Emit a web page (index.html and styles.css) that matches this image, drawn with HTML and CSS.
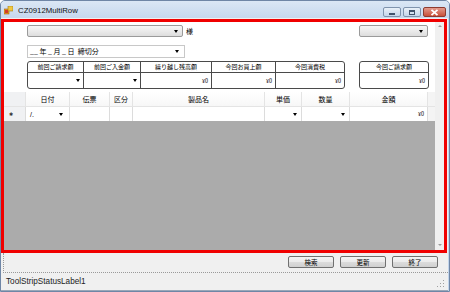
FILE: index.html
```html
<!DOCTYPE html>
<html lang="ja">
<head>
<meta charset="utf-8">
<title>CZ0912MultiRow</title>
<link rel="stylesheet" href="styles.css">
</head>
<body>
<div class="window">
  <div class="titlebar">
    <svg class="app-icon" width="9" height="9" viewBox="0 0 9 9">
      <rect x="0" y="3" width="5" height="5" fill="#e8a020" stroke="#a0601a" stroke-width="0.6"/>
      <rect x="4" y="0" width="5" height="5" fill="#f0c840" stroke="#a07a1a" stroke-width="0.6"/>
      <rect x="1" y="4" width="3" height="3" fill="#d23a2a"/>
    </svg>
    <span class="title">CZ0912MultiRow</span>
    <div class="caption-btns">
      <div class="cap-btn"><span class="cap-min"></span></div>
      <div class="cap-btn"><span class="cap-max"></span></div>
      <div class="cap-btn cap-close">
        <svg width="9" height="7" viewBox="0 0 9 7"><path d="M1.5 0.8 L7.5 6.2 M7.5 0.8 L1.5 6.2" stroke="#fff" stroke-width="1.8"/></svg>
      </div>
    </div>
  </div>
  <div class="client">
    <div class="grid-frame">
      <div class="grid-body">
        <div class="header-section">
          <div class="row1">
            <div class="combo combo-wide"><span class="arrow"></span></div>
            <span class="sama">様</span>
            <div class="spacer"></div>
            <div class="combo combo-small"><span class="arrow"></span></div>
          </div>
          <div class="row2">
            <div class="datebox">
              <span class="date-text">__ 年 _ 月 _ 日&nbsp;&nbsp;締切分</span>
              <span class="arrow"></span>
            </div>
          </div>
          <div class="row3">
            <div class="sumbox">
              <div class="sumcol c1"><div class="sumhead">前回ご請求額</div><div class="sumval"><span class="arrow"></span></div></div>
              <div class="sumcol c2"><div class="sumhead">前回ご入金額</div><div class="sumval"><span class="arrow"></span></div></div>
              <div class="sumcol c3"><div class="sumhead">繰り越し残高額</div><div class="sumval">¥0</div></div>
              <div class="sumcol c4"><div class="sumhead">今回お買上額</div><div class="sumval">¥0</div></div>
              <div class="sumcol c5"><div class="sumhead">今回消費税</div><div class="sumval">¥0</div></div>
            </div>
            <div class="spacer"></div>
            <div class="sumbox sumbox-single">
              <div class="sumcol c6"><div class="sumhead">今回ご請求額</div><div class="sumval">¥0</div></div>
            </div>
          </div>
          <div class="colheader">
            <div class="hc rh"></div>
            <div class="hc w-date">日付</div>
            <div class="hc w-slip">伝票</div>
            <div class="hc w-kbn">区分</div>
            <div class="hc w-name">製品名</div>
            <div class="hc w-price">単価</div>
            <div class="hc w-qty">数量</div>
            <div class="hc w-amt">金額</div>
            <div class="hc w-rest"></div>
          </div>
          <div class="newrow">
            <div class="nc rh star">✱</div>
            <div class="nc w-date"><span class="date-val">/.</span><span class="arrow"></span></div>
            <div class="nc w-slip"></div>
            <div class="nc w-kbn"></div>
            <div class="nc w-name"></div>
            <div class="nc w-price"><span class="arrow"></span></div>
            <div class="nc w-qty"><span class="arrow"></span></div>
            <div class="nc w-amt amt">¥0</div>
            <div class="nc w-rest"></div>
          </div>
        </div>
        <div class="empty-area"></div>
      </div>
      <div class="vscroll">
        <span class="sarrow up"></span>
        <span class="sarrow down"></span>
      </div>
    </div>
    <div class="button-panel">
      <button class="btn">検索</button>
      <button class="btn">更新</button>
      <button class="btn">終了</button>
    </div>
    <div class="status">
      <span class="status-label">ToolStripStatusLabel1</span>
      <svg class="grip" width="8" height="8" viewBox="0 0 8 8">
        <g fill="#a0a0a0"><rect x="6" y="0" width="1" height="1"/><rect x="6" y="3" width="1" height="1"/><rect x="3" y="3" width="1" height="1"/><rect x="6" y="6" width="1" height="1"/><rect x="3" y="6" width="1" height="1"/><rect x="0" y="6" width="1" height="1"/></g>
      </svg>
    </div>
  </div>
</div>
</body>
</html>
```

FILE: styles.css
```css
* { box-sizing: border-box; margin: 0; padding: 0; }
html, body { width: 450px; height: 292px; overflow: hidden; }
body {
  font-family: "Liberation Sans", "Noto Sans CJK JP", sans-serif;
  background: #ffffff;
  color: #000;
}
.window {
  width: 450px;
  height: 292px;
  display: flex;
  flex-direction: column;
  background: #c3d5ec;
  border: 1px solid #6f86a6;
  border-radius: 5px 5px 0 0;
}
.titlebar {
  height: 17px;
  flex: 0 0 17px;
  display: flex;
  align-items: center;
  padding-left: 3px;
  background: linear-gradient(#dbe7f5, #c6d8ee);
  border-radius: 4px 4px 0 0;
}
.app-icon { flex: 0 0 auto; margin-top: 1px; }
.title {
  font-size: 7.8px;
  margin-left: 5px;
  margin-top: 2px;
  color: #111;
}
.caption-btns {
  margin-left: auto;
  margin-right: 3px;
  margin-top: 6px;
  display: flex;
  gap: 2px;
  align-self: flex-start;
}
.cap-btn {
  width: 18px;
  height: 10px;
  border: 1px solid #7f93ad;
  border-radius: 2px;
  background: linear-gradient(#e9f0f8, #c5d5ea);
  display: flex;
  align-items: center;
  justify-content: center;
}
.cap-close {
  width: 23px;
  background: linear-gradient(#e39a8c, #c8503a);
  border-color: #8d3b30;
}
.cap-min { width: 6px; height: 2px; background: #41536d; margin-top: 3px; }
.cap-max { width: 6px; height: 5px; border: 1px solid #41536d; border-top-width: 2px; }

.client {
  flex: 1 1 auto;
  display: flex;
  flex-direction: column;
  background: #f0f0f0;
  padding-top: 1px;
  margin-right: 1px;
}
.grid-frame {
  height: 234px;
  flex: 0 0 234px;
  width: 446px;
  border: 3px solid #f00000;
  display: flex;
  background: #ffffff;
}
.grid-body {
  flex: 1 1 auto;
  display: flex;
  flex-direction: column;
  min-width: 0;
}
.header-section {
  display: flex;
  flex-direction: column;
  background: #ffffff;
}
.row1 {
  display: flex;
  align-items: center;
  margin-top: 3px;
  height: 12px;
  padding-left: 23px;
  padding-right: 7px;
}
.spacer { flex: 1 1 auto; }
.combo {
  height: 12px;
  border: 1px solid #9a9a9a;
  border-radius: 2px;
  background: linear-gradient(#f7f7f7, #dddddd);
  display: flex;
  align-items: center;
  justify-content: flex-end;
  padding-right: 4px;
}
.combo-wide { width: 156px; }
.combo-small { width: 69px; }
.arrow {
  display: inline-block;
  width: 0;
  height: 0;
  border-left: 2.5px solid transparent;
  border-right: 2.5px solid transparent;
  border-top: 3px solid #000;
}
.sama {
  font-family: "Noto Sans CJK JP", sans-serif;
  font-size: 7px;
  margin-left: 3px;
  line-height: 1;
}
.row2 {
  display: flex;
  margin-top: 8px;
  padding-left: 23px;
}
.datebox {
  width: 158px;
  height: 13px;
  border: 1px solid #c8c8c8;
  display: flex;
  align-items: center;
  padding-left: 2px;
  padding-right: 5px;
}
.date-text {
  font-family: "Noto Sans CJK JP", sans-serif;
  font-size: 7px;
  line-height: 1;
  white-space: pre;
  flex: 1 1 auto;
}
.row3 {
  display: flex;
  margin-top: 3px;
  padding-left: 23px;
  padding-right: 6px;
  height: 28px;
}
.sumbox {
  display: flex;
  border: 1px solid #4a4a4a;
  border-radius: 3px;
  height: 28px;
  overflow: hidden;
}
.sumbox-single { width: 70px; }
.sumcol {
  display: flex;
  flex-direction: column;
  border-right: 1px solid #4a4a4a;
}
.sumcol:last-child { border-right: none; }
.c1 { width: 56px; }
.c2 { width: 57px; }
.c3 { width: 71px; }
.c4 { width: 64px; }
.c5 { width: 68px; }
.c6 { width: 68px; }
.sumhead {
  height: 11px;
  flex: 0 0 11px;
  border-bottom: 1px solid #4a4a4a;
  font-family: "Noto Sans CJK JP", sans-serif;
  font-size: 6px;
  line-height: 10px;
  text-align: center;
  white-space: nowrap;
  color: #000;
}
.sumval {
  flex: 1 1 auto;
  display: flex;
  align-items: center;
  justify-content: flex-end;
  padding-right: 3px;
  font-family: "Noto Sans CJK JP", sans-serif;
  font-size: 5.5px;
}
.colheader {
  display: flex;
  margin-top: 3px;
  height: 15px;
}
.hc {
  height: 15px;
  border-right: 1px solid #e4e4e4;
  border-bottom: 1px solid #e4e4e4;
  font-family: "Noto Sans CJK JP", sans-serif;
  font-size: 7px;
  display: flex;
  align-items: center;
  justify-content: center;
  background: linear-gradient(#ffffff, #f7f7f7);
  line-height: 1;
}
.rh { width: 22px; background: #f0f1f3; }
.w-date { width: 44px; }
.w-slip { width: 40px; }
.w-kbn { width: 23px; }
.w-name { width: 132px; }
.w-price { width: 37px; }
.w-qty { width: 48px; }
.w-amt { width: 78px; }
.w-rest { flex: 1 1 auto; border-right: none; background: #f4f4f4; }
.newrow {
  display: flex;
  height: 14px;
}
.nc {
  height: 14px;
  border-right: 1px solid #dcdcdc;
  display: flex;
  align-items: center;
  justify-content: flex-end;
  padding-right: 4px;
  background: #ffffff;
}
.nc.rh {
  background: #f0f1f3;
  justify-content: flex-start;
  padding-left: 5px;
  font-size: 5px;
  color: #333;
}
.nc.w-rest { background: #f4f4f4; border-right: none; }
.nc.w-date { justify-content: space-between; padding-left: 4px; padding-right: 6px; }
.date-val { font-size: 7px; font-family: "Liberation Sans", sans-serif; line-height: 1; }
.amt {
  font-family: "Noto Sans CJK JP", sans-serif;
  font-size: 5.5px;
  padding-right: 3px;
}
.empty-area {
  flex: 1 1 auto;
  background: #ababab;
}
.vscroll {
  width: 9px;
  flex: 0 0 9px;
  background: #f0f0f0;
  display: flex;
  flex-direction: column;
  justify-content: space-between;
  align-items: center;
  padding: 3px 0 4px;
}
.sarrow {
  width: 0;
  height: 0;
  border-left: 2px solid transparent;
  border-right: 2px solid transparent;
}
.sarrow.up { border-bottom: 2px solid #9a9a9a; }
.sarrow.down { border-top: 2px solid #9a9a9a; }
.button-panel {
  height: 20px;
  flex: 0 0 20px;
  display: flex;
  justify-content: flex-end;
  align-items: flex-start;
  gap: 6px;
  padding-top: 3px;
  padding-right: 10px;
  margin-left: 2px;
  border-left: 1px dotted #9a9a9a;
  border-bottom: 1px dotted #9a9a9a;
}
.btn {
  width: 46px;
  height: 12px;
  border: 1px solid #707070;
  border-radius: 2px;
  background: linear-gradient(#f4f4f4 0%, #ebebeb 50%, #dcdcdc 51%, #d0d0d0 100%);
  font-family: "Noto Sans CJK JP", sans-serif;
  font-size: 6.5px;
  line-height: 10px;
  color: #000;
}
.status {
  flex: 1 1 auto;
  display: flex;
  align-items: center;
  justify-content: space-between;
  padding-left: 5px;
  padding-right: 3px;
  background: #f0f0f0;
  border-bottom: 1px solid #9aa7b8;
}
.status-label {
  font-size: 8.2px;
  color: #222;
}
.grip { align-self: flex-end; margin-bottom: 2px; }
```
